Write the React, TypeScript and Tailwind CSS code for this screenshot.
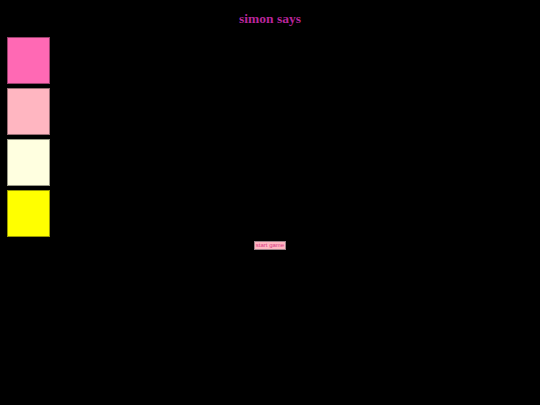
export default function App() {
  const pads = [
    "bg-[#ff69b4]",
    "bg-[#ffb6c1]",
    "bg-[#ffffe0]",
    "bg-[#ffff00]",
  ];
  return (
    <div className="min-h-[405px] w-full bg-black px-[7px] pt-[10px]">
      <h1
        className="text-center text-[13.5px] font-bold leading-[18px] text-[#b8259a]"
        style={{ fontFamily: '"Liberation Serif", serif' }}
      >
        simon says
      </h1>
      <div className="mt-[9px] flex flex-col gap-[4px]">
        {pads.map((c, i) => (
          <div
            key={i}
            className={`h-[47px] w-[43px] border border-black/40 ${c}`}
          />
        ))}
      </div>
      <div className="mt-[4px] flex justify-center">
        <button
          className="h-[9px] w-[32px] border border-[#9a8088] bg-[#ffb6c1] text-[6px] leading-[7px] text-[#d83c86]"
          style={{ fontFamily: '"Liberation Sans", sans-serif' }}
        >
          start game
        </button>
      </div>
    </div>
  );
}
